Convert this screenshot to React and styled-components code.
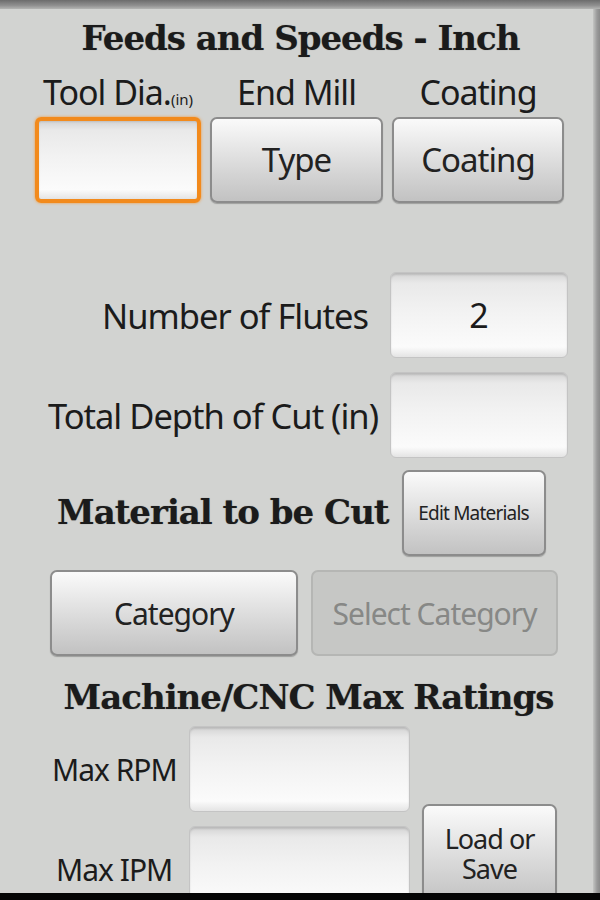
import styled, { createGlobalStyle } from 'styled-components'

const Global = createGlobalStyle`
  html, body {
    margin: 0;
    padding: 0;
    background: #000;
  }
`

const Frame = styled.div`
  width: 600px;
  height: 900px;
  background: #000;
  display: flex;
  flex-direction: column;
`
const TopBar = styled.div`
  height: 9px;
  flex-shrink: 0;
  background: linear-gradient(#6c6c6c, #8f8f8f 60%, #b4b5b3);
`
const Body = styled.div`
  flex: 1;
  display: flex;
  overflow: hidden;
  border-bottom: 7px solid #050505;
`
const LeftEdge = styled.div`
  width: 8px;
  flex-shrink: 0;
  background: linear-gradient(90deg, #000 0, #111 5px, #555 8px);
`
const RightEdge = styled.div`
  width: 7px;
  flex-shrink: 0;
  background: linear-gradient(90deg, #c4c5c3, #9a9a9a 4px, #8a8a8a);
`
const Screen = styled.div`
  flex: 1;
  margin-left: -8px;
  padding-left: 8px;
  background: #d2d3d1;
  overflow: hidden;
  font-family: "Noto Sans", "Open Sans", sans-serif;
  color: #1b1b1b;
`
const Heading = styled.h1`
  margin: 0;
  font-family: "DejaVu Serif", "Liberation Serif", serif;
  font-weight: 700;
  font-size: 34px;
  line-height: 1;
  text-align: center;
  letter-spacing: -1px;
  white-space: nowrap;
  padding-top: ${p => p.$top || 0}px;
  padding-left: ${p => p.$shift || 0}px;
  text-shadow: 0 0 1px rgba(0,0,0,0.4);
`
const TopGrid = styled.div`
  display: grid;
  grid-template-columns: 166px 173px 172px;
  column-gap: 9px;
  padding-left: 27px;
  margin-top: 17px;
`
const ColLabel = styled.div`
  text-align: center;
  font-size: 34px;
  line-height: 40px;
  letter-spacing: -1px;
  height: 40px;
  white-space: nowrap;
  margin-bottom: 5px;
`
const Small = styled.span`
  font-size: 15px;
  letter-spacing: 0;
`
const Field = styled.div`
  box-sizing: border-box;
  height: 86px;
  width: ${p => (p.$w ? p.$w + 'px' : 'auto')};
  border-radius: 6px;
  border: 1px solid #c4c4c4;
  background: linear-gradient(#d3d3d3 0, #e9e9e9 12%, #f2f2f2 45%, #fbfbfb 88%, #e4e4e4 100%);
  box-shadow: inset 0 2px 2px rgba(0,0,0,0.12);
  display: flex;
  align-items: center;
  justify-content: center;
  font-size: 34px;
  ${p => p.$focus && `
    border: 4px solid #f28a1c;
    box-shadow: 0 0 3px #f39a3a, inset 0 1px 2px rgba(0,0,0,0.1);
  `}
`
const Button = styled.div`
  box-sizing: border-box;
  height: ${p => p.$h || 86}px;
  width: ${p => (p.$w ? p.$w + 'px' : 'auto')};
  border-radius: 7px;
  border: 2px solid #8c8c8c;
  background: linear-gradient(#fafafa 0, #ececec 25%, #d8d8d8 60%, #c2c2c2 100%);
  box-shadow: 0 1px 1px rgba(0,0,0,0.25);
  display: flex;
  flex-direction: column;
  align-items: center;
  justify-content: center;
  text-align: center;
  font-size: ${p => p.$size || 32}px;
  line-height: ${p => p.$lh || '1.1'};
  letter-spacing: ${p => p.$ls ?? -1}px;
  color: #222;
  ${p => p.$disabled && `
    background: #c6c7c5;
    border-color: #b5b6b4;
    box-shadow: none;
    color: #878886;
  `}
`
const Line = styled.span`
  display: block;
  height: 30px;
  line-height: 30px;
`
const Row = styled.div`
  display: flex;
  align-items: center;
  padding-left: ${p => p.$left || 0}px;
  margin-top: ${p => p.$top || 0}px;
  gap: ${p => p.$gap || 0}px;
`
const RowLabel = styled.div`
  flex: 1;
  text-align: right;
  font-size: 34.5px;
  letter-spacing: -1px;
  white-space: nowrap;
  padding-right: ${p => p.$pad || 0}px;
`
const Spacer = styled.div`
  width: ${p => p.$w}px;
  flex-shrink: 0;
`
const MaterialLabel = styled.div`
  font-family: "DejaVu Serif", "Liberation Serif", serif;
  font-weight: 700;
  font-size: 34px;
  line-height: 1.1;
  letter-spacing: -1px;
  text-shadow: 0 0 1px rgba(0,0,0,0.4);
  white-space: nowrap;
`
const MachineGrid = styled.div`
  display: grid;
  grid-template-columns: 125px 221px 135px;
  grid-template-rows: 86px 86px;
  column-gap: 12px;
  row-gap: 14px;
  padding-left: 44px;
  margin-top: 12px;
`
const MachineLabel = styled.div`
  font-size: 30px;
  letter-spacing: -1px;
  white-space: nowrap;
  align-self: center;
  padding-left: ${p => p.$pad || 0}px;
`
const LoadSave = styled(Button)`
  grid-column: 3;
  grid-row: 1 / span 2;
  align-self: end;
  margin-bottom: 8px;
`

export default function App() {
  return (
    <Frame>
      <Global />
      <TopBar />
      <Body>
        <LeftEdge />
        <Screen>
          <Heading $top={12}>Feeds and Speeds - Inch</Heading>
          <TopGrid>
            <ColLabel>Tool Dia.<Small>(in)</Small></ColLabel>
            <ColLabel>End Mill</ColLabel>
            <ColLabel>Coating</ColLabel>
            <Field $focus />
            <Button $size={33}>Type</Button>
            <Button $size={33}>Coating</Button>
          </TopGrid>

          <Row $top={69}>
            <RowLabel $pad={22}>Number of Flutes</RowLabel>
            <Field $w={178}>2</Field>
            <Spacer $w={25} />
          </Row>
          <Row $top={14}>
            <RowLabel $pad={12}>Total Depth of Cut (in)</RowLabel>
            <Field $w={178} />
            <Spacer $w={25} />
          </Row>
          <Row $top={12} $left={49} $gap={13}>
            <MaterialLabel>Material to be Cut</MaterialLabel>
            <Button $w={144} $size={19} $ls={-0.8}>Edit Materials</Button>
          </Row>
          <Row $top={14} $left={42} $gap={13}>
            <Button $w={248} $size={30}>Category</Button>
            <Button $w={247} $size={30} $disabled>Select Category</Button>
          </Row>
          <Heading $top={24} $shift={16}>Machine/CNC Max Ratings</Heading>
          <MachineGrid>
            <MachineLabel>Max RPM</MachineLabel>
            <Field />
            <MachineLabel $pad={4}>Max IPM</MachineLabel>
            <Field />
            <LoadSave $h={100} $size={27}>
              <Line>Load or</Line>
              <Line>Save</Line>
            </LoadSave>
          </MachineGrid>
        </Screen>
        <RightEdge />
      </Body>
    </Frame>
  )
}
